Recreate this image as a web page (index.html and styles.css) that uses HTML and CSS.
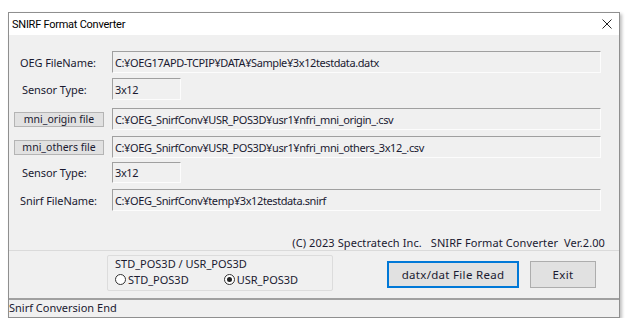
FILE: index.html
```html
<!DOCTYPE html>
<html>
<head>
<meta charset="utf-8">
<link rel="stylesheet" href="styles.css">
</head>
<body>
<div class="window">
  <div class="titlebar">
    <span class="title">SNIRF Format Converter</span>
    <svg class="close" width="10" height="10" viewBox="0 0 10 10"><path d="M0.5 0.5 L9.5 9.5 M9.5 0.5 L0.5 9.5" stroke="#222" stroke-width="1" fill="none"/></svg>
  </div>
  <div class="content">
    <div class="row r1">
      <div class="label">OEG FileName:</div>
      <div class="box wide">C:¥OEG17APD-TCPIP¥DATA¥Sample¥3x12testdata.datx</div>
    </div>
    <div class="row r2">
      <div class="label l2">Sensor Type:</div>
      <div class="box short">3x12</div>
    </div>
    <div class="row r3">
      <div class="btncell"><span class="fbtn">mni_origin file</span></div>
      <div class="box wide">C:¥OEG_SnirfConv¥USR_POS3D¥usr1¥nfri_mni_origin_.csv</div>
    </div>
    <div class="row r4">
      <div class="btncell"><span class="fbtn">mni_others file</span></div>
      <div class="box wide">C:¥OEG_SnirfConv¥USR_POS3D¥usr1¥nfri_mni_others_3x12_.csv</div>
    </div>
    <div class="row r5">
      <div class="label l2">Sensor Type:</div>
      <div class="box short">3x12</div>
    </div>
    <div class="row r6">
      <div class="label">Snirf FileName:</div>
      <div class="box wide">C:¥OEG_SnirfConv¥temp¥3x12testdata.snirf</div>
    </div>
    <div class="copyright">(C) 2023 Spectratech Inc.&nbsp;&nbsp;&nbsp;SNIRF Format Converter&nbsp;&nbsp;Ver.2.00</div>
  </div>
  <div class="bottom">
    <div class="group">
      <div class="legend">STD_POS3D / USR_POS3D</div>
      <div class="radios">
        <span class="radio"><span class="dot"></span>STD_POS3D</span>
        <span class="radio checked"><span class="dot"></span>USR_POS3D</span>
      </div>
    </div>
    <div class="btn primary">datx/dat File Read</div>
    <div class="btn exit">Exit</div>
  </div>
  <div class="status">Snirf Conversion End</div>
</div>
</body>
</html>
```
FILE: styles.css
```css
html, body {
  margin: 0;
  padding: 0;
  background: #ffffff;
}
body {
  font-family: "Noto Sans", "Noto Sans CJK JP", sans-serif;
  font-size: 11px;
  color: #1a1a30;
}
.window {
  margin: 12px 0 0 8px;
  width: 612px;
  height: 306px;
  box-sizing: border-box;
  border: 1px solid #8f8f8f;
  box-shadow: 2px 2px 3px rgba(0,0,0,0.25);
  background: #f0f0f0;
  display: flex;
  flex-direction: column;
}
.titlebar {
  height: 22px;
  background: #ffffff;
  display: flex;
  align-items: center;
  justify-content: space-between;
  padding: 0 7px 0 3px;
  flex: none;
}
.title {
  font-family: Roboto, "Noto Sans", sans-serif;
  font-size: 11px;
  letter-spacing: -0.25px;
  color: #000;
}
.content {
  height: 215px;
  flex: none;
  padding-top: 16px;
  box-sizing: border-box;
  display: flex;
  flex-direction: column;
}
.row {
  display: grid;
  grid-template-columns: 103px 489px;
  align-items: center;
  height: 22px;
}
.r2 { margin-top: 5px; }
.r3 { margin-top: 8px; }
.r4 { margin-top: 6px; }
.r5 { margin-top: 4px; height: 21px; }
.r6 { margin-top: 6px; }
.label {
  padding-left: 11px;
  letter-spacing: -0.1px;
}
.l2 { padding-left: 13px; }
.btncell {
  padding-left: 5px;
  display: flex;
}
.fbtn {
  width: 90px;
  height: 15px;
  box-sizing: border-box;
  border: 1px solid #b4b4b4;
  background: #e1e1e1;
  display: flex;
  align-items: center;
  justify-content: center;
  letter-spacing: 0px;
  font-size: 10.5px;
}
.box {
  height: 100%;
  box-sizing: border-box;
  border-top: 1px solid #a0a0a0;
  border-left: 1px solid #a0a0a0;
  border-right: 1px solid #fcfcfc;
  border-bottom: 1px solid #fcfcfc;
  display: flex;
  align-items: center;
  padding-left: 2px;
  white-space: nowrap;
  letter-spacing: -0.4px;
}
.wide { width: 489px; }
.short { width: 69px; }
.copyright {
  margin-top: 24px;
  text-align: right;
  padding-right: 14px;
  font-size: 11px;
  letter-spacing: 0.1px;
}
.bottom {
  height: 48px;
  flex: none;
  border-top: 1px solid #dadada;
  box-sizing: border-box;
  display: flex;
  align-items: flex-start;
  padding-left: 98px;
}
.group {
  margin-top: 4px;
  width: 226px;
  height: 36px;
  box-sizing: border-box;
  border: 1px solid #dcdcdc;
  border-radius: 2px;
  padding: 1px 0 0 7px;
}
.legend {
  line-height: 13px;
}
.radios {
  display: flex;
  gap: 35px;
  margin-top: 3px;
  line-height: 13px;
}
.radio {
  display: flex;
  align-items: center;
  gap: 2px;
}
.dot {
  width: 11px;
  height: 11px;
  box-sizing: border-box;
  border: 1px solid #333;
  border-radius: 50%;
  background: #fff;
  display: flex;
  align-items: center;
  justify-content: center;
}
.checked .dot::after {
  content: "";
  width: 5px;
  height: 5px;
  border-radius: 50%;
  background: #222;
}
.btn {
  margin-top: 10px;
  height: 27px;
  box-sizing: border-box;
  background: #e1e1e1;
  border: 1px solid #adadad;
  display: flex;
  align-items: center;
  justify-content: center;
  font-size: 11.5px;
  letter-spacing: 0.3px;
}
.primary {
  margin-left: 54px;
  width: 132px;
  border: 2px solid #0078d7;
}
.exit {
  margin-left: 11px;
  width: 66px;
}
.status {
  flex: 1;
  border-top: 2px solid #a0a0a0;
  padding-left: 0px;
  line-height: 16px;
}
```
